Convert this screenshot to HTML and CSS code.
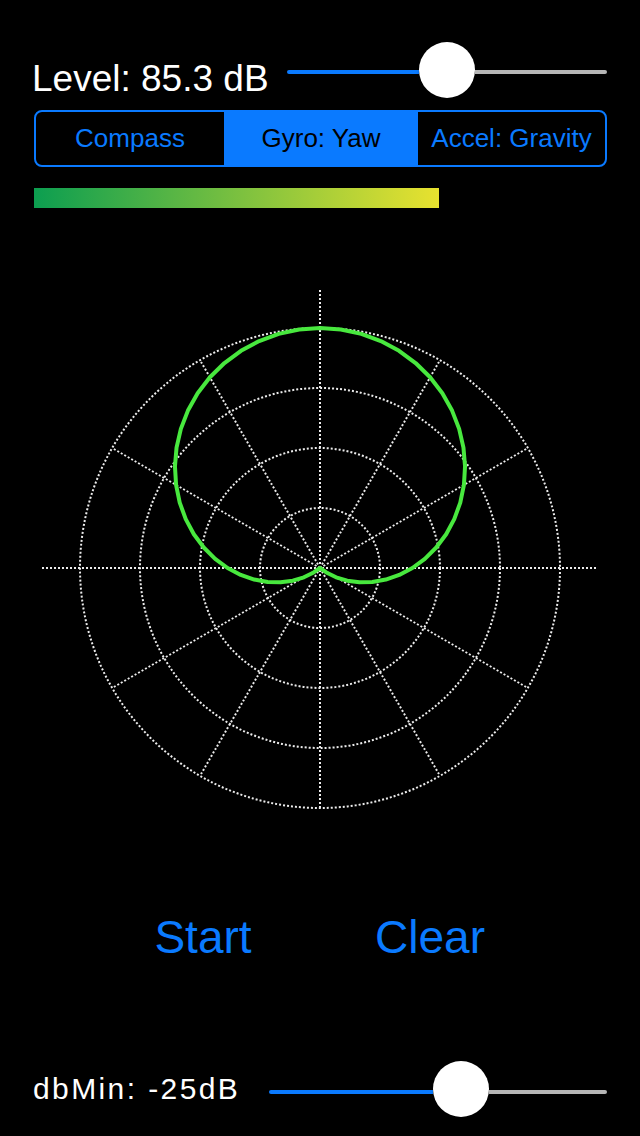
FILE: index.html
```html
<!DOCTYPE html>
<html>
<head>
<meta charset="utf-8">
<link rel="stylesheet" href="styles.css">
</head>
<body>
<div class="screen">
  <div class="top-row">
    <div class="level-label">Level: 85.3 dB</div>
    <div class="slider slider-top">
      <div class="track-min" style="width:132px"></div>
      <div class="thumb"></div>
      <div class="track-max"></div>
    </div>
  </div>

  <div class="segmented">
    <div class="seg seg-1">Compass</div>
    <div class="seg seg-2 selected">Gyro: Yaw</div>
    <div class="seg seg-3">Accel: Gravity</div>
  </div>

  <div class="meter" style="width:405px"></div>

  <svg class="chart" width="640" height="640" viewBox="0 0 640 640">
    <g class="grid">
      <circle cx="320" cy="320" r="60"/>
      <circle cx="320" cy="320" r="120"/>
      <circle cx="320" cy="320" r="180"/>
      <circle cx="320" cy="320" r="240"/>
      <line x1="42" y1="320" x2="598" y2="320"/>
      <line x1="320" y1="42" x2="320" y2="560"/>
      <line x1="320" y1="320" x2="527.85" y2="200"/>
      <line x1="320" y1="320" x2="112.15" y2="440"/>
      <line x1="320" y1="320" x2="112.15" y2="200"/>
      <line x1="320" y1="320" x2="527.85" y2="440"/>
      <line x1="320" y1="320" x2="440" y2="112.15"/>
      <line x1="320" y1="320" x2="200" y2="527.85"/>
      <line x1="320" y1="320" x2="200" y2="112.15"/>
      <line x1="320" y1="320" x2="440" y2="527.85"/>
    </g>
    <polyline class="pattern" points="320,80 299.13,81.47 278.71,85.85 259.18,93.04 240.96,102.84 224.42,115.02 209.89,129.28 197.65,145.27 187.93,162.6 180.86,180.86 176.54,199.62 174.96,218.44 176.07,236.9 179.72,254.59 185.74,271.13 193.85,286.2 203.76,299.5 215.14,310.83 227.6,320 240.76,326.93 254.24,331.59 267.65,334.03 280.61,334.34 292.79,332.69 303.89,329.3 313.66,324.44 320,320 326.34,324.44 336.11,329.3 347.21,332.69 359.39,334.34 372.35,334.03 385.76,331.59 399.24,326.93 412.4,320 424.86,310.83 436.24,299.5 446.15,286.2 454.26,271.13 460.28,254.59 463.93,236.9 465.04,218.44 463.46,199.62 459.14,180.86 452.07,162.6 442.35,145.27 430.11,129.28 415.58,115.02 399.04,102.84 380.82,93.04 361.29,85.85 340.87,81.47 320,80"/>
  </svg>

  <div class="buttons">
    <div class="btn">Start</div>
    <div class="btn">Clear</div>
  </div>

  <div class="bottom-row">
    <div class="db-label">dbMin: -25dB</div>
    <div class="slider slider-bottom">
      <div class="track-min" style="width:164px"></div>
      <div class="thumb"></div>
      <div class="track-max"></div>
    </div>
  </div>
</div>
</body>
</html>
```

FILE: styles.css
```css
html, body {
  margin: 0;
  padding: 0;
  background: #000;
}

.screen {
  width: 640px;
  height: 1136px;
  overflow: hidden;
  background: #000;
  color: #fff;
  font-family: "Liberation Sans", Arial, sans-serif;
  display: flex;
  flex-direction: column;
}

.top-row {
  margin-top: 42px;
  height: 56px;
  display: flex;
  align-items: center;
  padding-left: 32px;
  padding-right: 33px;
}

.level-label {
  font-size: 37px;
  line-height: 38px;
  align-self: flex-end;
  white-space: nowrap;
}

.slider {
  margin-left: auto;
  height: 56px;
  display: flex;
  align-items: center;
}

.slider-top {
  width: 320px;
}

.slider-bottom {
  width: 338px;
}

.slider-top .track-min,
.slider-top .track-max {
  margin-top: 4px;
}

.slider-bottom .track-min,
.slider-bottom .track-max {
  margin-top: 5px;
}

.track-min {
  height: 4px;
  background: #0a7aff;
  border-radius: 2px 0 0 2px;
  flex: none;
}

.track-max {
  height: 4px;
  background: #b6b6b6;
  border-radius: 0 2px 2px 0;
  flex: 1;
}

.thumb {
  width: 56px;
  height: 56px;
  border-radius: 50%;
  background: #fff;
  flex: none;
  box-shadow: 0 2px 3px rgba(0, 0, 0, 0.25);
}

.segmented {
  margin-top: 12px;
  margin-left: 34px;
  width: 573px;
  height: 57px;
  box-sizing: border-box;
  border: 2px solid #0a7aff;
  border-radius: 8px;
  display: flex;
  overflow: hidden;
}

.seg {
  display: flex;
  align-items: center;
  justify-content: center;
  font-size: 26px;
  color: #0a7aff;
  white-space: nowrap;
}

.seg-1 { width: 188px; }
.seg-2 { width: 194px; }
.seg-3 { flex: 1; }

.seg.selected {
  background: #0a7aff;
  color: #000;
}

.meter {
  margin-top: 21px;
  margin-left: 34px;
  height: 20px;
  background: linear-gradient(to right, #0c9e50, #e8e22f);
}

.chart {
  display: block;
  margin-top: 40px;
  flex: none;
}

.grid circle,
.grid line {
  fill: none;
  stroke: #ececec;
  stroke-width: 2;
  stroke-dasharray: 2 2;
}

.pattern {
  fill: none;
  stroke: #48e83e;
  stroke-width: 4;
  stroke-linejoin: round;
}

.buttons {
  margin-top: 21px;
  display: flex;
  padding-left: 103px;
  gap: 27px;
}

.btn {
  width: 200px;
  text-align: center;
  font-size: 46px;
  line-height: 56px;
  color: #0a7aff;
}

.bottom-row {
  margin-top: 96px;
  height: 56px;
  display: flex;
  align-items: center;
  padding-left: 33px;
  padding-right: 33px;
}

.db-label {
  font-size: 30px;
  line-height: 56px;
  letter-spacing: 2.4px;
  white-space: nowrap;
}
```
